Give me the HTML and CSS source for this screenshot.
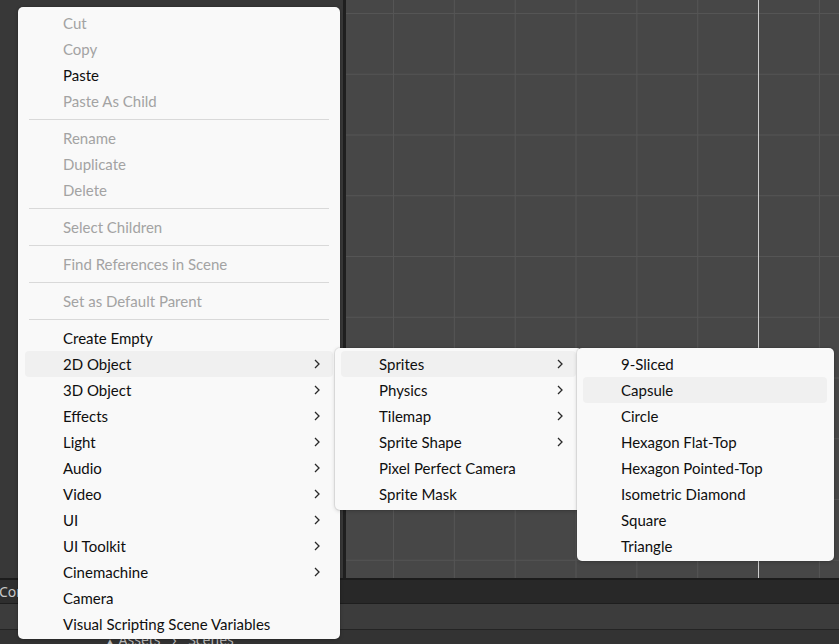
FILE: index.html
```html
<!DOCTYPE html>
<html>
<head>
<meta charset="utf-8">
<link rel="stylesheet" href="styles.css">
</head>
<body>
<div class="editor">
  <div class="upper">
    <div class="hierarchy"></div>
    <div class="divider"></div>
    <div class="scene"></div>
  </div>
  <div class="tabbar"><span class="tab">Console</span></div>
  <div class="toolbar"></div>
  <div class="breadcrumb"><span class="crumb-icon">▲</span> Assets <span class="sep">›</span> Scenes</div>
</div>

<div class="menu main-menu">
  <div class="item disabled">Cut</div>
  <div class="item disabled">Copy</div>
  <div class="item">Paste</div>
  <div class="item disabled">Paste As Child</div>
  <div class="separator"></div>
  <div class="item disabled">Rename</div>
  <div class="item disabled">Duplicate</div>
  <div class="item disabled">Delete</div>
  <div class="separator"></div>
  <div class="item disabled">Select Children</div>
  <div class="separator"></div>
  <div class="item disabled">Find References in Scene</div>
  <div class="separator"></div>
  <div class="item disabled">Set as Default Parent</div>
  <div class="separator"></div>
  <div class="item">Create Empty</div>
  <div class="item active">2D Object<svg class="chev" viewBox="0 0 6 10"><path d="M1 1L5 5L1 9"/></svg></div>
  <div class="item">3D Object<svg class="chev" viewBox="0 0 6 10"><path d="M1 1L5 5L1 9"/></svg></div>
  <div class="item">Effects<svg class="chev" viewBox="0 0 6 10"><path d="M1 1L5 5L1 9"/></svg></div>
  <div class="item">Light<svg class="chev" viewBox="0 0 6 10"><path d="M1 1L5 5L1 9"/></svg></div>
  <div class="item">Audio<svg class="chev" viewBox="0 0 6 10"><path d="M1 1L5 5L1 9"/></svg></div>
  <div class="item">Video<svg class="chev" viewBox="0 0 6 10"><path d="M1 1L5 5L1 9"/></svg></div>
  <div class="item">UI<svg class="chev" viewBox="0 0 6 10"><path d="M1 1L5 5L1 9"/></svg></div>
  <div class="item">UI Toolkit<svg class="chev" viewBox="0 0 6 10"><path d="M1 1L5 5L1 9"/></svg></div>
  <div class="item">Cinemachine<svg class="chev" viewBox="0 0 6 10"><path d="M1 1L5 5L1 9"/></svg></div>
  <div class="item">Camera</div>
  <div class="item">Visual Scripting Scene Variables</div>
</div>

<div class="menu sub-menu-1">
  <div class="item active">Sprites<svg class="chev" viewBox="0 0 6 10"><path d="M1 1L5 5L1 9"/></svg></div>
  <div class="item">Physics<svg class="chev" viewBox="0 0 6 10"><path d="M1 1L5 5L1 9"/></svg></div>
  <div class="item">Tilemap<svg class="chev" viewBox="0 0 6 10"><path d="M1 1L5 5L1 9"/></svg></div>
  <div class="item">Sprite Shape<svg class="chev" viewBox="0 0 6 10"><path d="M1 1L5 5L1 9"/></svg></div>
  <div class="item">Pixel Perfect Camera</div>
  <div class="item">Sprite Mask</div>
</div>

<div class="menu sub-menu-2">
  <div class="item">9-Sliced</div>
  <div class="item active">Capsule</div>
  <div class="item">Circle</div>
  <div class="item">Hexagon Flat-Top</div>
  <div class="item">Hexagon Pointed-Top</div>
  <div class="item">Isometric Diamond</div>
  <div class="item">Square</div>
  <div class="item">Triangle</div>
</div>
</body>
</html>
```

FILE: styles.css
```css
html, body {
  margin: 0;
  padding: 0;
}
body {
  width: 839px;
  height: 644px;
  overflow: hidden;
  background: #383838;
  font-family: "Lato", "Noto Sans", sans-serif;
  position: relative;
}
.editor {
  display: flex;
  flex-direction: column;
  height: 644px;
  overflow: hidden;
}
.upper {
  display: flex;
  flex: 0 0 auto;
  height: 578px;
  border-bottom: 2px solid #1c1c1c;
}
.hierarchy {
  width: 343px;
  background: #383838;
}
.divider {
  width: 3px;
  background: #1f1f1f;
}
.scene {
  flex: 1;
  background-color: #474747;
  background-image:
    linear-gradient(to right, transparent 412px, #cfcfcf 412px, #cfcfcf 413px, transparent 413px),
    linear-gradient(to right, #555555 1px, transparent 1px),
    linear-gradient(to bottom, #555555 1px, transparent 1px);
  background-size: 100% 100%, 60.85px 60.75px, 60.85px 60.75px;
  background-repeat: no-repeat, repeat, repeat;
  background-position: 0 0, 47px 13px, 47px 13px;
}
.tabbar {
  flex: 0 0 auto;
  height: 23px;
  background: #282828;
  border-bottom: 1px solid #1e1e1e;
  display: flex;
  align-items: center;
}
.tab {
  font-family: "Noto Sans", sans-serif;
  font-size: 14px;
  color: #c8c8c8;
  margin-left: -1px;
  height: 23px;
  line-height: 23px;
  padding-right: 20px;
  background: #2e2e2e;
}
.toolbar {
  flex: 0 0 auto;
  height: 25px;
  background: #3c3c3c;
  border-bottom: 1px solid #242424;
}
.breadcrumb {
  flex: 1 1 auto;
  min-height: 0;
  overflow: hidden;
  background: #333333;
  color: #bdbdbd;
  font-family: "Noto Sans", sans-serif;
  font-size: 14px;
  padding-left: 105px;
  padding-top: 2px;
  line-height: 16px;
  white-space: nowrap;
}
.crumb-icon {
  font-size: 10px;
}
.sep {
  padding: 0 8px;
}

.menu {
  position: absolute;
  background: #f9f9f9;
  border-radius: 5px;
  box-shadow: 0 0 0 1px rgba(0, 0, 0, 0.06), 0 1px 4px rgba(0, 0, 0, 0.18);
  display: flex;
  flex-direction: column;
  font-size: 15px;
  color: #0f0f0f;
}
.main-menu {
  left: 18px;
  top: 7px;
  width: 322px;
  padding: 3px 0 2px;
}
.sub-menu-1 {
  left: 335px;
  top: 348px;
  width: 247px;
  padding: 3px 0;
}
.sub-menu-2 {
  left: 577px;
  top: 348px;
  width: 257px;
  padding: 3px 0 2px;
}
.item {
  height: 26px;
  line-height: 26px;
  margin: 0 7px;
  padding: 0 13px 0 38px;
  border-radius: 4px;
  display: flex;
  justify-content: space-between;
  align-items: center;
  white-space: nowrap;
}
.sub-menu-1 .item {
  margin: 0 6px;
}
.sub-menu-2 .item {
  margin: 0 7px 0 6px;
}
.item.disabled {
  color: #a3a3a3;
}
.item.active {
  background: #f0f0f0;
}
.chev {
  width: 6px;
  height: 10px;
  fill: none;
  stroke: #2a2a2a;
  stroke-width: 1.3;
}
.separator {
  height: 1px;
  background: #d9d9d9;
  margin: 5px 11px;
}
```
